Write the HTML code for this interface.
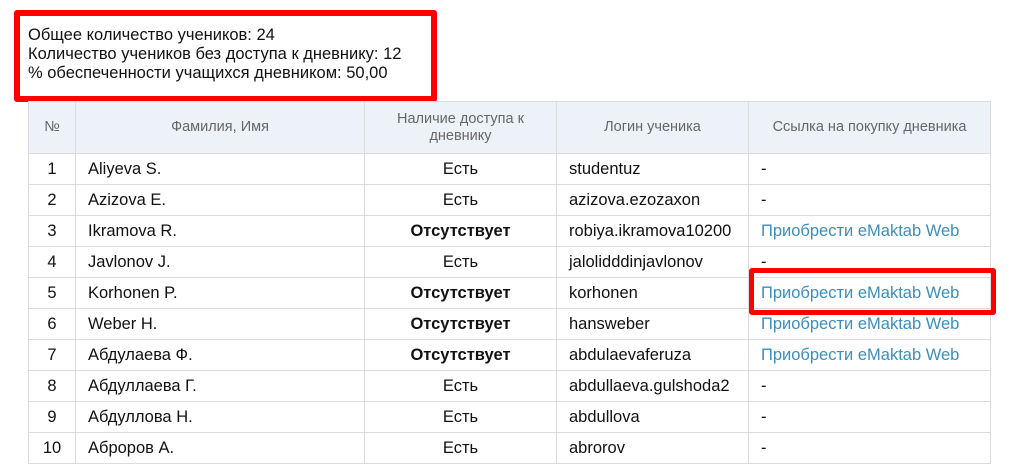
<!DOCTYPE html>
<html><head><meta charset="utf-8"><style>
body{margin:0;width:1030px;height:448px;overflow:hidden;background:#fff;font-family:"Liberation Sans",Arial,sans-serif;color:#111;position:relative}
.info{position:absolute;left:14px;top:10px;width:411px;height:80px;border:6px solid #f00;border-radius:3px}
.info div{position:absolute;left:8px;font-size:16.5px;line-height:20px}
table{position:absolute;left:28px;top:101px;border-collapse:collapse;table-layout:fixed;width:962px}
td,th{border:1px solid #dcdcdc;font-size:16.5px;padding:0 0 0 12px;height:30px;white-space:nowrap;overflow:hidden}
th{background:#edf2f9;color:#666;font-weight:normal;font-size:14.5px;height:51px;text-align:center;padding:0;line-height:17px}
td.c{text-align:center;padding:0}
b{font-weight:bold}
a{color:#3a8ebf;text-decoration:none}
.hl{position:absolute;left:749px;top:268px;width:237px;height:37px;border:5px solid #f00;border-radius:3px}
</style></head><body>
<div class="info">
<div style="top:9px">Общее количество учеников: 24</div>
<div style="top:28px">Количество учеников без доступа к дневнику: 12</div>
<div style="top:47px">% обеспеченности учащихся дневником: 50,00</div>
</div>
<table>
<colgroup><col style="width:47px"><col style="width:289px"><col style="width:192px"><col style="width:192px"><col style="width:242px"></colgroup>
<tr><th>№</th><th>Фамилия, Имя</th><th>Наличие доступа к<br>дневнику</th><th>Логин ученика</th><th>Ссылка на покупку дневника</th></tr>
<tr><td class="c">1</td><td>Aliyeva S.</td><td class="c">Есть</td><td>studentuz</td><td>-</td></tr>
<tr><td class="c">2</td><td>Azizova E.</td><td class="c">Есть</td><td>azizova.ezozaxon</td><td>-</td></tr>
<tr><td class="c">3</td><td>Ikramova R.</td><td class="c"><b>Отсутствует</b></td><td>robiya.ikramova10200</td><td><a>Приобрести eMaktab Web</a></td></tr>
<tr><td class="c">4</td><td>Javlonov J.</td><td class="c">Есть</td><td>jalolidddinjavlonov</td><td>-</td></tr>
<tr><td class="c">5</td><td>Korhonen P.</td><td class="c"><b>Отсутствует</b></td><td>korhonen</td><td><a>Приобрести eMaktab Web</a></td></tr>
<tr><td class="c">6</td><td>Weber H.</td><td class="c"><b>Отсутствует</b></td><td>hansweber</td><td><a>Приобрести eMaktab Web</a></td></tr>
<tr><td class="c">7</td><td>Абдулаева Ф.</td><td class="c"><b>Отсутствует</b></td><td>abdulaevaferuza</td><td><a>Приобрести eMaktab Web</a></td></tr>
<tr><td class="c">8</td><td>Абдуллаева Г.</td><td class="c">Есть</td><td>abdullaeva.gulshoda2</td><td>-</td></tr>
<tr><td class="c">9</td><td>Абдуллова Н.</td><td class="c">Есть</td><td>abdullova</td><td>-</td></tr>
<tr><td class="c">10</td><td>Аброров А.</td><td class="c">Есть</td><td>abrorov</td><td>-</td></tr>
</table>
<div class="hl"></div>
</body></html>
